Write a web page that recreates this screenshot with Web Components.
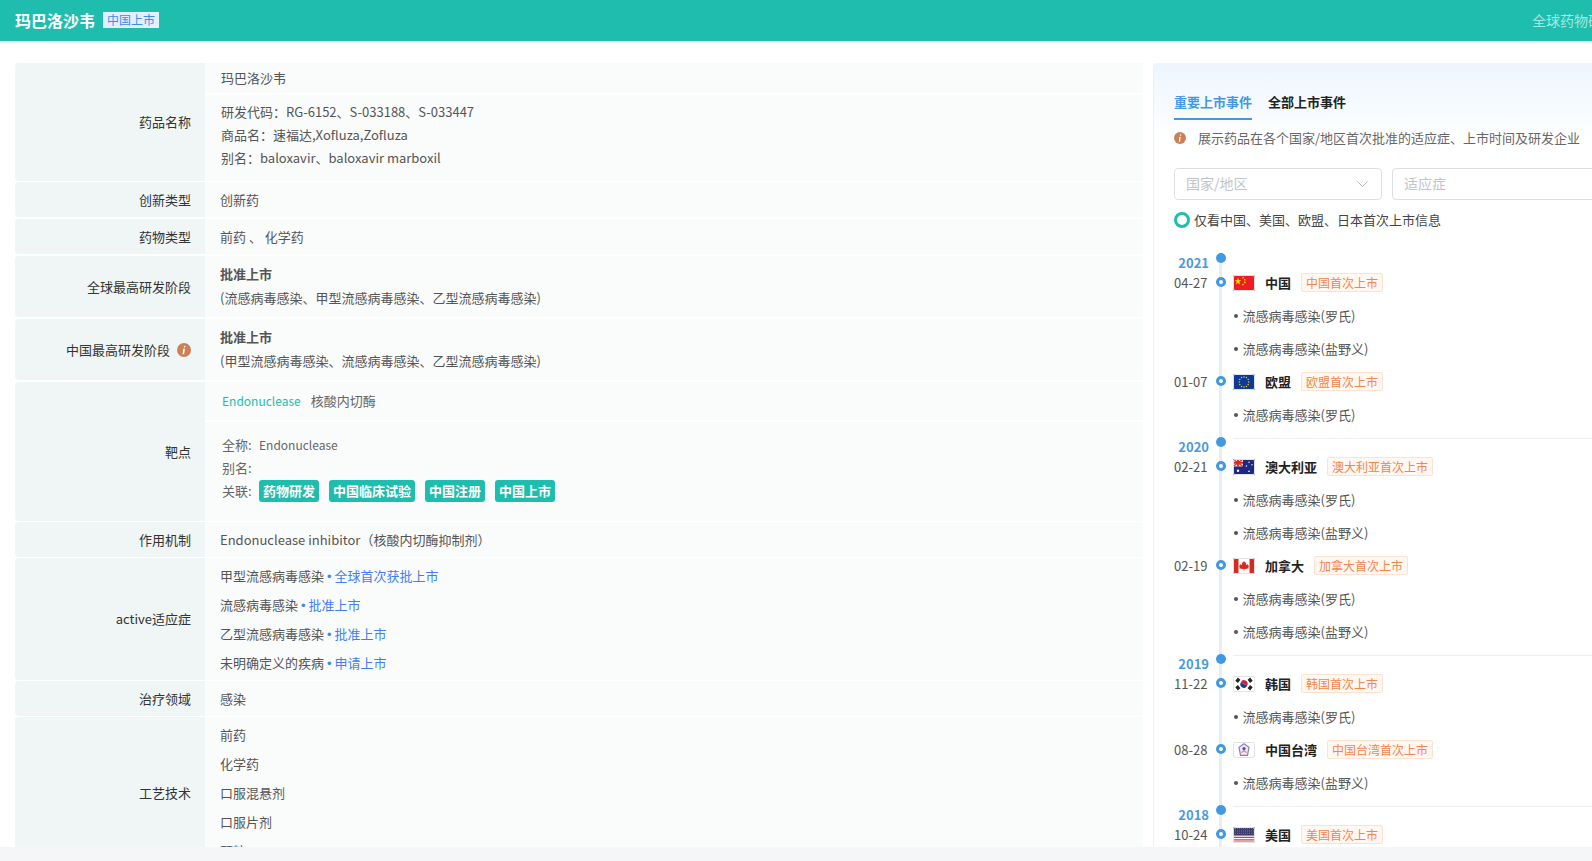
<!DOCTYPE html>
<html lang="zh">
<head>
<meta charset="utf-8">
<title>玛巴洛沙韦</title>
<style>
  html, body { margin: 0; height: 100%; overflow: hidden; background: #fff; }
  body { font: 13px/1.5 "Noto Sans CJK SC", "Noto Sans", sans-serif; color: #555; }
</style>
</head>
<body>
<drug-page>
  <top-bar slot="bar" name="玛巴洛沙韦" badge="中国上市" side="全球药物研发状态"></top-bar>

  <info-table slot="left">
    <info-row label="药品名称">
      <info-cell pad="name">玛巴洛沙韦</info-cell>
      <info-cell pad="names">
        <div>研发代码：RG-6152、S-033188、S-033447</div>
        <div>商品名：速福达,Xofluza,Zofluza</div>
        <div>别名：baloxavir、baloxavir marboxil</div>
      </info-cell>
    </info-row>
    <info-row label="创新类型" snug><info-cell>创新药</info-cell></info-row>
    <info-row label="药物类型"><info-cell>前药 、 化学药</info-cell></info-row>
    <info-row label="全球最高研发阶段">
      <info-cell pad="stage"><b>批准上市</b><br>(流感病毒感染、甲型流感病毒感染、乙型流感病毒感染)</info-cell>
    </info-row>
    <info-row label="中国最高研发阶段" hint>
      <info-cell pad="stage"><b>批准上市</b><br>(甲型流感病毒感染、流感病毒感染、乙型流感病毒感染)</info-cell>
    </info-row>
    <info-row label="靶点">
      <info-cell pad="target-head"><target-head name="Endonuclease" cn="核酸内切酶"></target-head></info-cell>
      <info-cell pad="target-body">
        <target-line key="全称:"><span style="font-size:12px">Endonuclease</span></target-line>
        <target-line key="别名:"></target-line>
        <target-line key="关联:">
          <link-tag>药物研发</link-tag><link-tag>中国临床试验</link-tag><link-tag>中国注册</link-tag><link-tag>中国上市</link-tag>
        </target-line>
      </info-cell>
    </info-row>
    <info-row label="作用机制" snug><info-cell>Endonuclease inhibitor（核酸内切酶抑制剂）</info-cell></info-row>
    <info-row label="active适应症" snug>
      <info-cell pad="list">
        <status-line status="全球首次获批上市">甲型流感病毒感染</status-line>
        <status-line status="批准上市">流感病毒感染</status-line>
        <status-line status="批准上市">乙型流感病毒感染</status-line>
        <status-line status="申请上市">未明确定义的疾病</status-line>
      </info-cell>
    </info-row>
    <info-row label="治疗领域" snug><info-cell>感染</info-cell></info-row>
    <info-row label="工艺技术" snug>
      <info-cell pad="list">
        <status-line>前药</status-line>
        <status-line>化学药</status-line>
        <status-line>口服混悬剂</status-line>
        <status-line>口服片剂</status-line>
        <status-line>颗粒</status-line>
      </info-cell>
    </info-row>
  </info-table>

  <launch-panel slot="right"></launch-panel>
</drug-page>

<script>
// Shared info badge, used by the table row and the panel note
const hintIcon = (size) => `
  <svg width="${size}" height="${size}" viewBox="0 0 14 14" style="display:block;flex:none">
    <circle cx="7" cy="7" r="7" fill="#cb8056"/>
    <rect x="6.4" y="2.7" width="1.7" height="1.7" rx=".8" fill="#fff" transform="skewX(-8) translate(.9 0)"/>
    <rect x="6.2" y="5.5" width="1.6" height="5.8" rx=".6" fill="#fff" transform="skewX(-8) translate(.9 0)"/>
  </svg>`;

class DrugPage extends HTMLElement {
  constructor() {
    super();
    this.attachShadow({ mode: 'open' });
    this.shadowRoot.innerHTML = `
      <style>
        :host { display: flex; flex-direction: column; width: 1700px; height: 861px; }
        main {
          flex: 1;
          min-height: 0;
          overflow: hidden;
          display: flex;
          align-items: flex-start;
          gap: 10px;
          padding: 18px 0 0 15px;
          background: #fff;
        }
        .left { flex: none; width: 1128px; }
        .right { flex: none; width: 547px; margin-top: 2px; }
        footer { flex: none; height: 14px; background: #f5f6f8; }
      </style>
      <slot name="bar"></slot>
      <main>
        <div class="left"><slot name="left"></slot></div>
        <div class="right"><slot name="right"></slot></div>
      </main>
      <footer></footer>
    `;
  }
}

class TopBar extends HTMLElement {
  constructor() {
    super();
    this.attachShadow({ mode: 'open' });
  }

  connectedCallback() {
    this.shadowRoot.innerHTML = `
      <style>
        :host {
          display: flex;
          flex: none;
          box-sizing: border-box;
          align-items: center;
          height: 43px;
          padding: 0 56px 1px 15px;
          background: #1fbdae;
          border-bottom: 2px solid #eeefef;
        }
        .name { font-size: 16px; font-weight: 700; color: #fff; }
        .badge {
          margin-left: 8px;
          height: 16px;
          line-height: 16px;
          padding: 0 4px;
          font-size: 12px;
          color: #3f8cf0;
          background: #e4effc;
        }
        .side { margin-left: auto; font-size: 14px; color: #a5e8df; }
      </style>
      <span class="name">${this.getAttribute('name')}</span>
      <span class="badge">${this.getAttribute('badge')}</span>
      <span class="side">${this.getAttribute('side')}</span>
    `;
  }
}

class InfoTable extends HTMLElement {
  constructor() {
    super();
    this.attachShadow({ mode: 'open' });
    this.shadowRoot.innerHTML = `
      <style>:host { display: flex; flex-direction: column; }</style>
      <slot></slot>
    `;
  }
}

class InfoRow extends HTMLElement {
  constructor() {
    super();
    this.attachShadow({ mode: 'open' });
  }

  connectedCallback() {
    const icon = this.hasAttribute('hint') ? hintIcon(14) : '';
    this.shadowRoot.innerHTML = `
      <style>
        :host { display: grid; grid-template-columns: 190px 1fr; margin-top: 2px; }
        :host([snug]) { margin-top: 1px; }
        .label {
          display: flex;
          align-items: center;
          justify-content: flex-end;
          gap: 7px;
          padding-right: 14px;
          color: #333;
          background: #eff6f5;
          border-radius: 4px 0 0 4px;
        }
        .cells { display: flex; flex-direction: column; gap: 2px; min-width: 0; }
      </style>
      <div class="label"><span>${this.getAttribute('label')}</span>${icon}</div>
      <div class="cells"><slot></slot></div>
    `;
  }
}

// pad attribute picks the box of one value cell
class InfoCell extends HTMLElement {
  constructor() {
    super();
    this.attachShadow({ mode: 'open' });
    this.shadowRoot.innerHTML = `
      <style>
        :host {
          display: block;
          flex: 1;
          padding: 8px 15px;
          line-height: 19px;
          background: #fafbfb;
        }
        :host([pad="name"]) { padding: 5px 16px 6px; }
        :host([pad="names"]) { padding: 5px 16px 12px; line-height: 23px; }
        :host([pad="stage"]) { padding: 6px 15px 7px; line-height: 24px; }
        :host([pad="target-head"]) { padding: 9px 17px; line-height: 20px; }
        :host([pad="target-body"]) { padding: 11px 17px 19px; line-height: 23px; }
        :host([pad="list"]) { padding: 3px 15px; line-height: 29px; }
      </style>
      <slot></slot>
    `;
  }
}

class TargetHead extends HTMLElement {
  constructor() {
    super();
    this.attachShadow({ mode: 'open' });
  }

  connectedCallback() {
    this.shadowRoot.innerHTML = `
      <style>
        :host { display: flex; gap: 10px; color: #666; }
        .en { color: #1fbdad; font-size: 12px; }
      </style>
      <span class="en">${this.getAttribute('name')}</span>
      <span>${this.getAttribute('cn')}</span>
    `;
  }
}

class TargetLine extends HTMLElement {
  constructor() {
    super();
    this.attachShadow({ mode: 'open' });
  }

  connectedCallback() {
    this.shadowRoot.innerHTML = `
      <style>
        :host { display: flex; height: 23px; align-items: center; color: #666; }
        .key { flex: none; width: 37px; }
        .val { display: flex; align-items: center; gap: 10px; }
      </style>
      <span class="key">${this.getAttribute('key')}</span>
      <div class="val"><slot></slot></div>
    `;
  }
}

class LinkTag extends HTMLElement {
  constructor() {
    super();
    this.attachShadow({ mode: 'open' });
    this.shadowRoot.innerHTML = `
      <style>
        :host {
          display: block;
          height: 22px;
          line-height: 21px;
          padding: 0 4px;
          font-weight: 700;
          color: #fff;
          background: #1fbdad;
          border-radius: 3px;
        }
      </style>
      <slot></slot>
    `;
  }
}

class StatusLine extends HTMLElement {
  constructor() {
    super();
    this.attachShadow({ mode: 'open' });
  }

  connectedCallback() {
    const status = this.getAttribute('status');
    this.shadowRoot.innerHTML = `
      <style>
        :host { display: block; height: 29px; color: #555; }
        .st { color: #3f7ff0; }
        .dot { font-family: "Liberation Sans", sans-serif; color: #3f8fd8; margin: 0 3px; }
      </style>
      <slot></slot>${status ? `<span class="dot">•</span><span class="st">${status}</span>` : ''}
    `;
  }
}

class CountryFlag extends HTMLElement {
  constructor() {
    super();
    this.attachShadow({ mode: 'open' });
  }

  connectedCallback() {
    const flags = {
      cn: `<rect width="22" height="15" fill="#ee1c25"/>
           <polygon points="5,2.4 5.8,4.9 8.3,4.9 6.3,6.4 7,8.9 5,7.4 3,8.9 3.7,6.4 1.7,4.9 4.2,4.9" fill="#ffde00"/>
           <g fill="#ffde00"><circle cx="10" cy="2.4" r=".8"/><circle cx="11.8" cy="4.4" r=".8"/><circle cx="11.8" cy="7" r=".8"/><circle cx="10" cy="9" r=".8"/></g>`,
      eu: `<rect width="22" height="15" fill="#0f3a94"/>
           <g fill="#f7cf1d">${Array.from({ length: 12 }, (_, i) => {
             const a = i * Math.PI / 6;
             return `<circle cx="${(11 + 4.8 * Math.cos(a)).toFixed(1)}" cy="${(7.5 + 4.8 * Math.sin(a)).toFixed(1)}" r=".7"/>`;
           }).join('')}</g>`,
      au: `<rect width="22" height="15" fill="#1b2a80"/>
           <rect width="10" height="7" fill="#e8e4ee"/>
           <path d="M0 0L10 7M10 0L0 7" stroke="#d22" stroke-width="1"/>
           <path d="M5 0V7M0 3.5H10" stroke="#d22" stroke-width="1.8"/>
           <g fill="#fff"><circle cx="5" cy="11" r="1.2"/><circle cx="16" cy="3" r=".7"/><circle cx="13.5" cy="6.5" r=".7"/><circle cx="19" cy="5.5" r=".7"/><circle cx="16" cy="11.5" r=".8"/></g>`,
      ca: `<rect width="22" height="15" fill="#fff"/>
           <rect width="5.5" height="15" fill="#d52b1e"/><rect x="16.5" width="5.5" height="15" fill="#d52b1e"/>
           <path d="M11 2.5L12 4.5L13.2 4L12.8 6.8L14.4 5.6L15 7L16 7L15.3 9L15.8 9.6L12.6 10.4L11.3 10.3V12.5H10.7V10.3L9.4 10.4L6.2 9.6L6.7 9L6 7L7 7L7.6 5.6L9.2 6.8L8.8 4L10 4.5Z" fill="#d52b1e"/>`,
      kr: `<rect width="22" height="15" fill="#fff"/>
           <path d="M7.4 7.5a3.6 3.6 0 0 1 7.2 0z" fill="#d0213a" transform="rotate(25 11 7.5)"/>
           <path d="M7.4 7.5a3.6 3.6 0 0 0 7.2 0z" fill="#1a3f8f" transform="rotate(25 11 7.5)"/>
           <g stroke="#222" stroke-width="1.6">
             <path d="M3 5L5.5 2M4.3 6L6.8 3"/><path d="M15.2 3L17.7 6M16.5 2L19 5"/>
             <path d="M3 10L5.5 13M4.3 9L6.8 12"/><path d="M15.2 12L17.7 9M16.5 13L19 10"/>
           </g>`,
      tw: `<rect width="22" height="15" fill="#fff"/>
           <polygon points="11,1.6 16,5 14.5,12.6 7.5,12.6 6,5" fill="#f3e6f0" stroke="#8d7fb8" stroke-width="1.2" stroke-linejoin="round"/>
           <circle cx="11" cy="6.2" r="1.6" fill="#2f5fb0"/>
           <path d="M8.5 10L11 8L13.5 10" stroke="#d77" fill="none"/>`,
      us: `<rect width="22" height="15" fill="#fff"/>
           <path d="M0 1H22M0 3.2H22M0 5.4H22M0 7.6H22M0 9.8H22M0 12H22M0 14.2H22" stroke="#c9434e" stroke-width="1.1"/>
           <rect width="22" height="7.5" fill="#3c3b6e"/>
           <path d="M0 1.5H22M0 3.7H22M0 5.9H22" stroke="#8b8ab0" stroke-width=".7" stroke-dasharray="1 1"/>`
    };
    this.shadowRoot.innerHTML = `
      <style>
        :host { display: block; flex: none; width: 22px; height: 16px; margin-top: 1px; }
        svg { display: block; border-radius: 2px; outline: 1px solid #e2e3e6; outline-offset: -1px; }
      </style>
      <svg width="22" height="16" viewBox="0 0 22 15" preserveAspectRatio="none">${flags[this.getAttribute('code')]}</svg>
    `;
  }
}

class LaunchEvent extends HTMLElement {
  constructor() {
    super();
    this.attachShadow({ mode: 'open' });
  }

  connectedCallback() {
    const name = this.getAttribute('name');
    const items = this.getAttribute('items').split('|');
    this.shadowRoot.innerHTML = `
      <style>
        :host { display: block; }
        .row { display: grid; grid-template-columns: 34px 25px 1fr; height: 33px; align-items: center; }
        .date { color: #555; white-space: nowrap; padding-top: 2px; }
        .axis {
          position: relative;
          z-index: 1;
          justify-self: center;
          box-sizing: border-box;
          width: 10px;
          height: 10px;
          margin-left: 1px;
          border: 3px solid #4299e1;
          border-radius: 50%;
          background: #fff;
        }
        .what { display: flex; align-items: center; }
        .name { margin-left: 10px; padding-top: 2px; font-weight: 700; color: #222; }
        .first {
          margin-left: 10px;
          padding: 0 4px;
          height: 17px;
          line-height: 17px;
          font-size: 12px;
          color: #f58548;
          background: #fff8f2;
          border: 1px solid #fde3cf;
          border-radius: 2px;
        }
        .item::before { content: ''; width: 4px; height: 4px; border-radius: 50%; background: #555; margin: 0 4.5px 0 1px; flex: none; }
        .item { grid-column: 3; display: flex; align-items: center; padding-top: 2px; color: #555; }
      </style>
      <div class="row">
        <span class="date">${this.getAttribute('date')}</span>
        <span class="axis"></span>
        <div class="what">
          <country-flag code="${this.getAttribute('code')}"></country-flag>
          <span class="name">${name}</span>
          <span class="first">${name}首次上市</span>
        </div>
      </div>
      ${items.map(i => `<div class="row"><span class="item">${i}</span></div>`).join('')}
    `;
  }
}

class LaunchYear extends HTMLElement {
  constructor() {
    super();
    this.attachShadow({ mode: 'open' });
  }

  connectedCallback() {
    this.shadowRoot.innerHTML = `
      <style>
        :host { display: block; margin-top: 7.5px; }
        :host([first]) { margin-top: 0; }
        .head { display: grid; grid-template-columns: 34px 25px 1fr; height: 11.5px; }
        .year { font-weight: 700; color: #4a9ae0; line-height: 19px; height: 19px; margin: -1px -1px 0 0; text-align: right; white-space: nowrap; }
        .dot { position: relative; z-index: 1; justify-self: center; width: 10px; height: 10px; margin: -1px 0 0 1px; border-radius: 50%; background: #4299e1; }
        .rule { border-top: 1px solid #eceef1; height: 0; }
        :host([first]) .rule { border: 0; }
      </style>
      <div class="head">
        <span class="year">${this.getAttribute('year')}</span>
        <span class="dot"></span>
        <span class="rule"></span>
      </div>
      <slot></slot>
    `;
  }
}

class LaunchPanel extends HTMLElement {
  constructor() {
    super();
    this.attachShadow({ mode: 'open' });
  }

  connectedCallback() {
    const RO = '流感病毒感染(罗氏)', YE = '流感病毒感染(盐野义)';
    const years = [
      ['2021', [['04-27', 'cn', '中国', [RO, YE]], ['01-07', 'eu', '欧盟', [RO]]]],
      ['2020', [['02-21', 'au', '澳大利亚', [RO, YE]], ['02-19', 'ca', '加拿大', [RO, YE]]]],
      ['2019', [['11-22', 'kr', '韩国', [RO]], ['08-28', 'tw', '中国台湾', [YE]]]],
      ['2018', [['10-24', 'us', '美国', [RO]]]]
    ];
    const timeline = years.map(([y, events], idx) => `
      <launch-year year="${y}" ${idx === 0 ? 'first' : ''}>
        ${events.map(([d, c, n, items]) => `<launch-event date="${d}" code="${c}" name="${n}" items="${items.join('|')}"></launch-event>`).join('')}
      </launch-year>`).join('');

    this.shadowRoot.innerHTML = `
      <style>
        :host {
          display: block;
          box-sizing: border-box;
          height: 900px;
          padding: 26px 20px 0 20px;
          border-left: 1px solid #eef0f3;
          border-radius: 4px 0 0 0;
          background: linear-gradient(#edf5fd, #fff 80px);
        }
        .tabs { display: flex; gap: 16px; height: 31px; font-weight: 700; color: #222; line-height: 25px; }
        .tabs .on { color: #4299e1; box-sizing: border-box; height: 31px; border-bottom: 2px solid #4299e1; }
        .note { display: flex; align-items: center; gap: 12px; height: 20px; margin-top: 8px; color: #666; white-space: nowrap; }
        .filters { display: flex; gap: 10px; margin-top: 20px; }
        .sel {
          box-sizing: border-box;
          display: flex;
          align-items: center;
          justify-content: space-between;
          width: 208px;
          height: 32px;
          padding: 0 13px 2px 11px;
          font-size: 14px;
          color: #c0c4cc;
          background: #fff;
          border: 1px solid #dcdfe3;
          border-radius: 4px;
        }
        .sel svg { margin-top: 2px; }
        .only { display: flex; align-items: center; gap: 4px; height: 20px; margin-top: 9.5px; color: #444; }
        .radio { box-sizing: border-box; width: 16px; height: 16px; border: 3.5px solid #1fbdad; border-radius: 50%; background: #fff; }
        .tl { position: relative; margin-top: 24.5px; }
        .line { position: absolute; left: 45px; top: 4px; bottom: 0; width: 3px; background: #e6eef8; }
      </style>
      <div class="tabs"><span class="on">重要上市事件</span><span>全部上市事件</span></div>
      <div class="note">${hintIcon(12)}<span>展示药品在各个国家/地区首次批准的适应症、上市时间及研发企业</span></div>
      <div class="filters">
        <div class="sel"><span>国家/地区</span>
          <svg width="11" height="6" viewBox="0 0 11 6"><path d="M.5.5L5.5 5.5L10.5.5" fill="none" stroke="#b4b8bf"/></svg>
        </div>
        <div class="sel"><span>适应症</span></div>
      </div>
      <div class="only"><span class="radio"></span><span>仅看中国、美国、欧盟、日本首次上市信息</span></div>
      <div class="tl"><div class="line"></div>${timeline}</div>
    `;
  }
}

customElements.define('drug-page', DrugPage);
customElements.define('top-bar', TopBar);
customElements.define('info-table', InfoTable);
customElements.define('info-row', InfoRow);
customElements.define('info-cell', InfoCell);
customElements.define('target-head', TargetHead);
customElements.define('target-line', TargetLine);
customElements.define('link-tag', LinkTag);
customElements.define('status-line', StatusLine);
customElements.define('country-flag', CountryFlag);
customElements.define('launch-event', LaunchEvent);
customElements.define('launch-year', LaunchYear);
customElements.define('launch-panel', LaunchPanel);
</script>
</body>
</html>
